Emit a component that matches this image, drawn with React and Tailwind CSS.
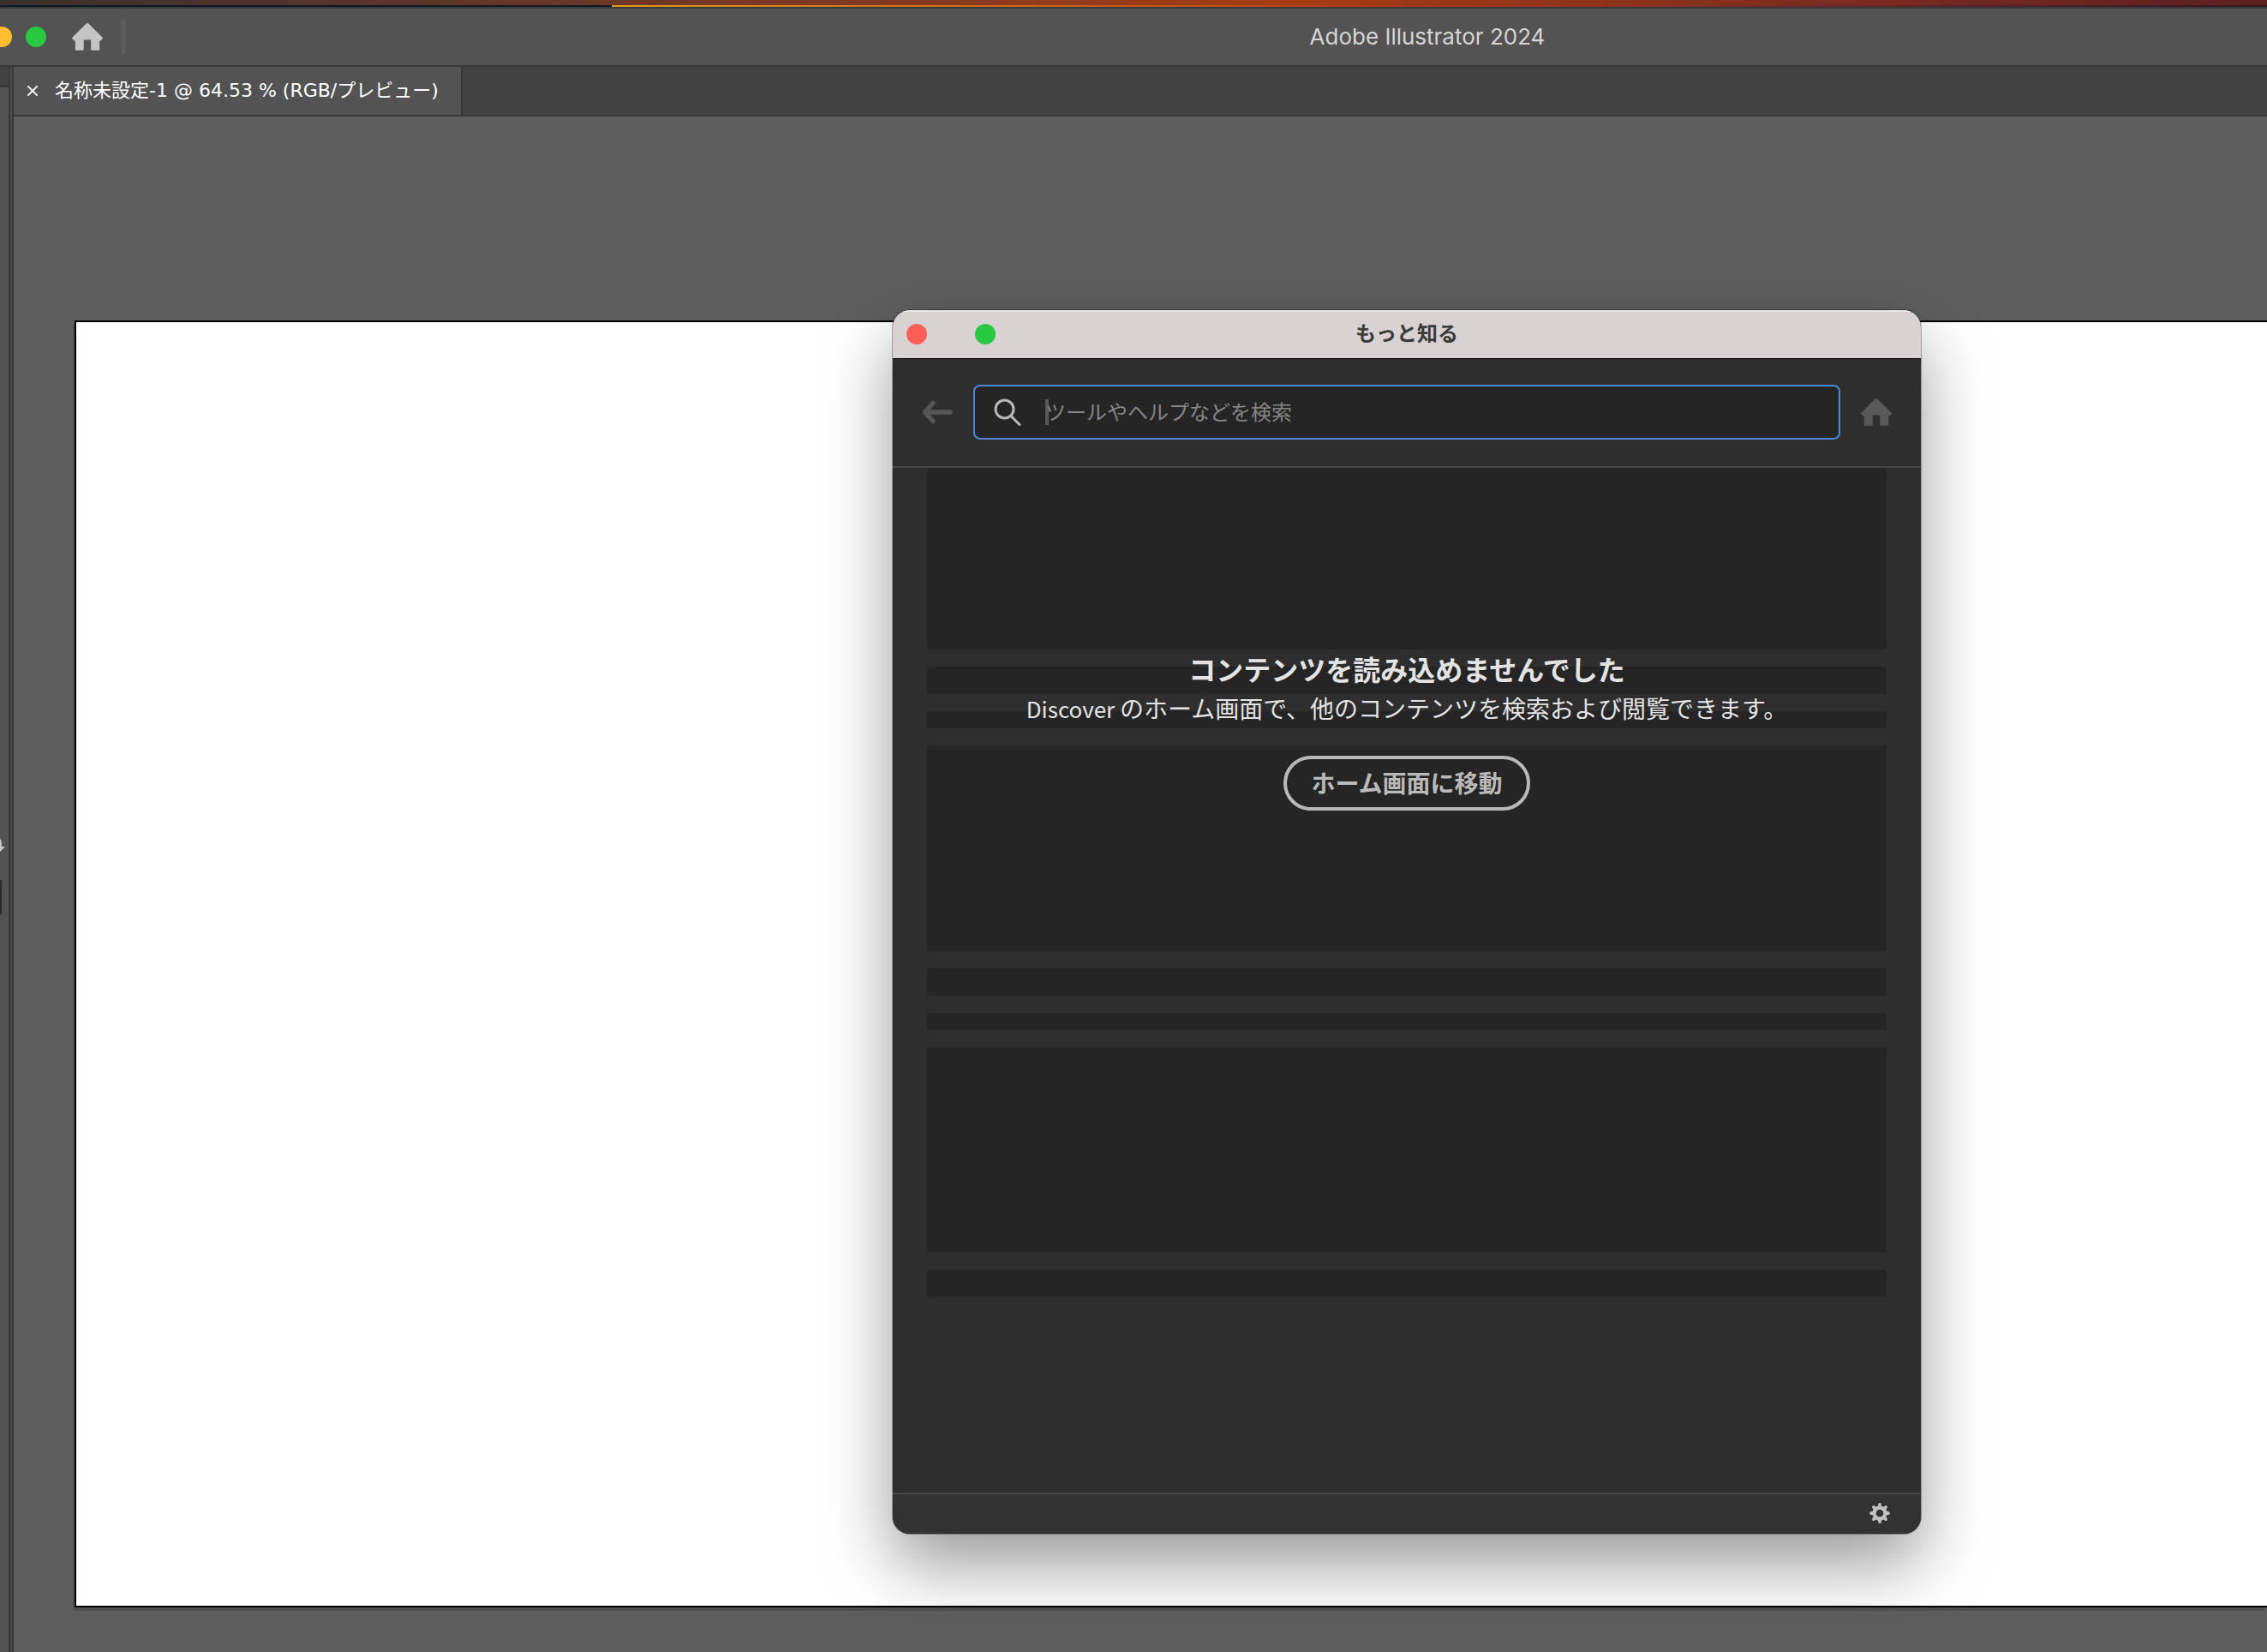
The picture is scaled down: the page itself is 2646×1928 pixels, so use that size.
import { useState } from 'react';

// Placeholder rows behind the error message
const skeletonRows = ['h-[212px]', 'h-8', 'h-5', 'h-60', 'h-8', 'h-5', 'h-60', 'h-8'];

function HomeIcon({ className }) {
  return (
    <svg viewBox="0 0 36 32" className={className} fill="currentColor" aria-hidden="true">
      <path d="M16.7.6.8 16.2c-1 1-.9 1.7-.2 2.3l1.5 1.400c.6.5 1 .6 1.700.6v10c0 .9.5 1.300 1.300 1.300h7.400c.9 0 1.300-.5 1.300-1.300V19.600h8.400v10.900c0 .8.5 1.300 1.300 1.300h7.400c.8 0 1.300-.4 1.300-1.300v-10c.7 0 1.100-.1 1.700-.6l1.500-1.400c.7-.6.8-1.300-.2-2.300L19.300.6c-.9-.8-1.700-.8-2.600 0Z" />
    </svg>
  );
}

function BackIcon() {
  return (
    <svg viewBox="0 0 36 28" className="h-7 w-9" fill="none" stroke="currentColor" strokeWidth="5.5" strokeLinecap="round" strokeLinejoin="round" aria-hidden="true">
      <path d="M33 14H4M13 3.5 3.5 14 13 24.5" />
    </svg>
  );
}

function SearchIcon() {
  return (
    <svg viewBox="0 0 32 32" className="h-8 w-8 shrink-0 text-[#b9b9b9]" fill="none" stroke="currentColor" strokeWidth="3" strokeLinecap="round" aria-hidden="true">
      <circle cx="12.5" cy="12.5" r="10.5" />
      <path d="m20 20.5 10 10" />
    </svg>
  );
}

function GearIcon() {
  return (
    <svg viewBox="-12 -12 24 24" className="h-6 w-6" fill="none" stroke="currentColor" aria-hidden="true">
      <circle r="6.5" strokeWidth="4.4" />
      {[0, 45, 90, 135].map((angle) => (
        <path key={angle} d="M0-10v2M0 10V8" transform={`rotate(${angle})`} strokeWidth="3.8" strokeLinecap="round" />
      ))}
    </svg>
  );
}

function TitleBar() {
  return (
    <header className="flex h-[68px] items-center border-b-2 border-[#383838] bg-[#535353]">
      <button aria-label="しまう" className="-ml-2.5 size-6 rounded-full bg-[#febc2e]" />
      <button aria-label="フルスクリーン" className="ml-4 size-6 rounded-full bg-[#28c840]" />
      <button aria-label="ホーム" className="ml-[30px] text-[#c4c4c4]">
        <HomeIcon className="h-8 w-9" />
      </button>
      <span className="ml-[22px] h-10 w-1 bg-[#5e5e5e]" />
      <h1 className="flex-1 pl-[540px] text-center font-['Inter',sans-serif] text-[26px] leading-8 text-[#d6d6d6]">
        Adobe Illustrator 2024
      </h1>
    </header>
  );
}

function ToolStrip() {
  return (
    <aside className="flex w-4 shrink-0 border-r-2 border-[#383838] bg-[#4c4c4c]">
      <div className="w-3 border-r-2 border-[#383838] bg-[#535353]">
        <div className="h-6 border-b-2 border-[#383838] bg-[#434343]" />
        <svg viewBox="0 0 6 16" className="mt-[877px] h-4 w-1.5 text-[#c8c8c8]" fill="currentColor" aria-hidden="true">
          <path d="M0 0c1.5 1 2 4 2 9h4L0 15Z" />
        </svg>
        <div className="mt-8 h-10 w-0.5 bg-[#2b2b2b]" />
      </div>
    </aside>
  );
}

function DiscoverWindow() {
  const [query, setQuery] = useState('');

  return (
    <section
      aria-label="もっと知る"
      className="absolute top-[362px] left-[1042px] w-[1200px] overflow-hidden rounded-[20px] bg-[#2e2e2e] shadow-[0_0_0_1px_rgba(0,0,0,0.3),0_36px_80px_rgba(0,0,0,0.4)]"
    >
      <div className="grid h-[57px] grid-cols-[1fr_auto_1fr] items-center border-t-2 border-b border-t-[#eeeaea] border-b-black bg-[#d8d2d2] px-4 pb-0.5">
        <div className="flex gap-14">
          <button aria-label="閉じる" className="size-6 rounded-full bg-[#ff5f57]" />
          <button aria-label="拡大" className="size-6 rounded-full bg-[#28c840]" />
        </div>
        <h2 className="pb-1 text-2xl font-bold text-[#3c3a3a]">もっと知る</h2>
      </div>

      <div className="flex items-center border-b-2 border-[#464646] px-[34px] pt-[30px] pb-[31px]">
        <button aria-label="戻る" className="text-[#565656]">
          <BackIcon />
        </button>
        <label className="mx-6 flex h-16 flex-1 items-center gap-7 rounded-lg border-2 border-[#4a8ad8] bg-[#252525] px-[22px]">
          <SearchIcon />
          <span className="flex flex-1 items-center">
            <span className="-mr-1 h-[30px] w-1 bg-[#5a5a5a]" />
            <input
              type="text"
              value={query}
              onChange={(e) => setQuery(e.target.value)}
              aria-label="検索"
              placeholder="ツールやヘルプなどを検索"
              className="w-full bg-transparent pb-0.5 text-2xl text-white outline-none placeholder:text-[#858585]"
            />
          </span>
        </label>
        <button aria-label="Discover ホーム" className="text-[#595959]">
          <HomeIcon className="h-8 w-9" />
        </button>
      </div>

      <div className="relative h-[1196px] px-10">
        <div className="flex flex-col gap-5">
          {skeletonRows.map((height, i) => (
            <div key={i} className={`${height} rounded-xs bg-[#252525]`} />
          ))}
        </div>

        {/* Error message over the skeleton */}
        <div className="absolute inset-x-0 top-[211px] flex flex-col items-center text-[#e3e3e3]">
          <h3 className="text-[32px] leading-[46px] font-bold">コンテンツを読み込めませんでした</h3>
          <p className="text-[28px] leading-[46px]">
            <span className="text-[26px]">Discover </span>
            のホーム画面で、他のコンテンツを検索および閲覧できます。
          </p>
          <button className="mt-8 h-16 rounded-full border-4 border-[#b9b9b9] px-7 pb-0.5 text-[28px] leading-10 font-bold text-[#b9b9b9]">
            ホーム画面に移動
          </button>
        </div>
      </div>

      <footer className="flex h-12 items-center justify-end border-t-2 border-[#464646] bg-[#323232] px-9 pb-0.5">
        <button aria-label="設定" className="text-[#c0c0c0]">
          <GearIcon />
        </button>
      </footer>
    </section>
  );
}

export default function App() {
  return (
    <div className="relative flex min-h-screen flex-col overflow-hidden bg-[#5e5e5e] font-['Noto_Sans_CJK_JP',sans-serif]">
      {/* Desktop wallpaper above the window */}
      <div className="h-1.5 bg-linear-to-r from-[#3a2e2c] via-[#a63b10] via-57% to-[#5c2020]" />
      <div className="flex h-0.5">
        <div className="w-[27%] bg-[#0c1a28]" />
        <div className="flex-1 bg-linear-to-r from-[#e09a20] via-[#b83a1a] via-45% to-[#301428]" />
      </div>
      <div className="h-0.5 bg-[#3a3a3a]" />

      <TitleBar />

      <div className="flex flex-1">
        <ToolStrip />
        <main className="flex min-w-0 flex-1 flex-col">
          <nav className="flex h-[58px] border-b-2 border-[#383838] bg-[#434343]">
            <div className="flex items-center border-r-2 border-[#383838] bg-[#535353] pr-[26px] pl-4 text-white">
              <button aria-label="タブを閉じる" className="text-[#f0f0f0]">
                <svg viewBox="0 0 12 12" className="size-3" stroke="currentColor" strokeWidth="2" strokeLinecap="round" aria-hidden="true">
                  <path d="m1 1 10 10M11 1 1 11" />
                </svg>
              </button>
              <a href="#artboard" className="ml-5 font-['DejaVu_Sans','Noto_Sans_CJK_JP',sans-serif] text-[22px] leading-8 whitespace-nowrap">
                名称未設定-1 @ 64.53 % (RGB/プレビュー)
              </a>
            </div>
          </nav>
          <div className="flex flex-1 pt-[238px] pb-[52px] pl-[71px]">
            <div id="artboard" className="flex-1 border-2 border-r-0 border-black bg-white shadow-[-2px_4px_0_#505050]" />
          </div>
        </main>
      </div>

      <DiscoverWindow />
    </div>
  );
}
